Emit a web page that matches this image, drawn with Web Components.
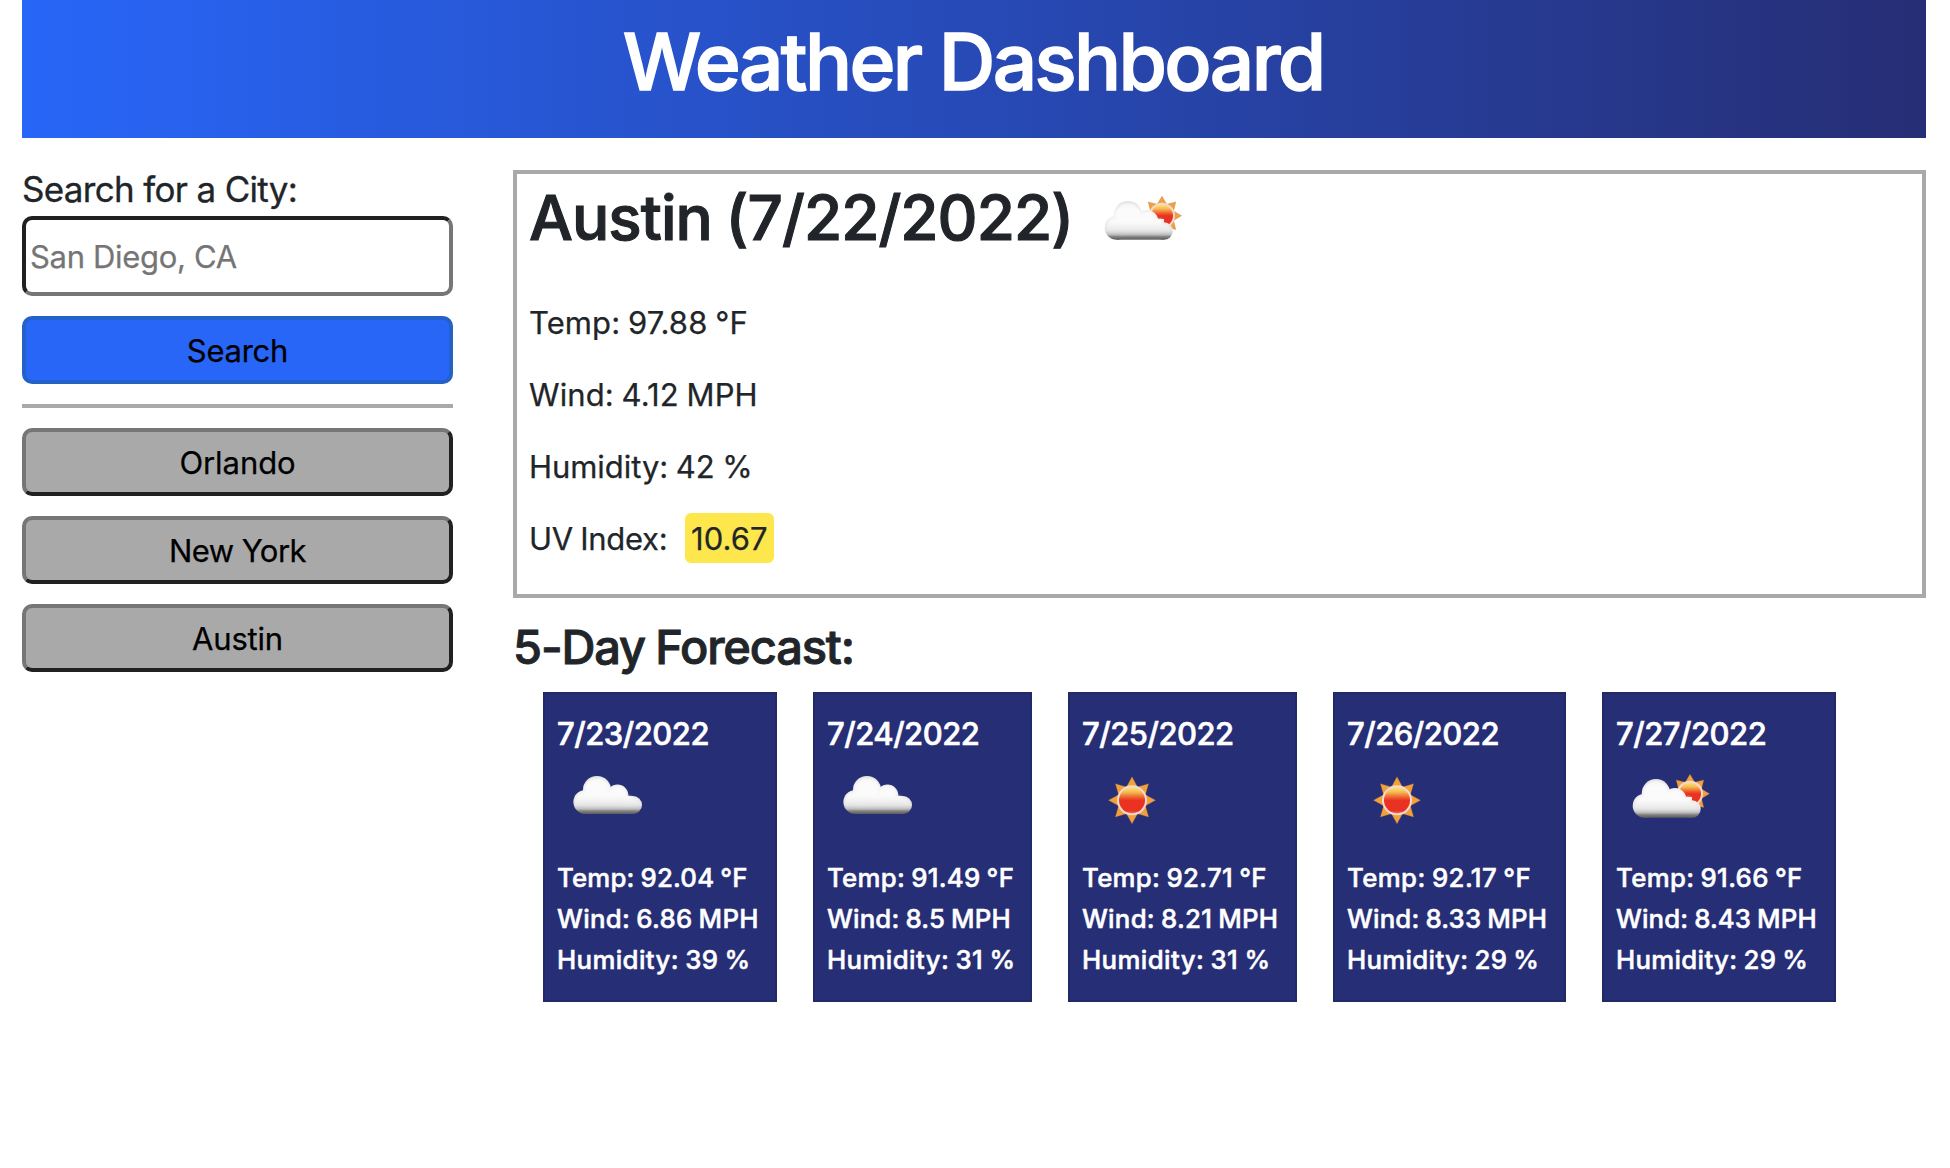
<!DOCTYPE html>
<html lang="en">
<head>
<meta charset="utf-8">
<title>Weather Dashboard</title>
<style>
body{margin:0;background:#fff;color:#212529;font-family:Inter,"Liberation Sans",sans-serif}
</style>
</head>
<body>
<weather-app></weather-app>
<script>
const define = (name, html, setup) => {
  const tpl = document.createElement('template');
  tpl.innerHTML = html;
  customElements.define(name, class extends HTMLElement {
    constructor() {
      super();
      this.attachShadow({mode: 'open'}).append(tpl.content.cloneNode(true));
    }
    connectedCallback() { if (setup) setup(this, this.shadowRoot); }
  });
};

const sun = (x, y, outer, disk) => {
  const pts = [];
  for (let i = 0; i < 16; i++) {
    const r = i % 2 ? disk + .5 : outer, a = i * Math.PI / 8;
    pts.push((x + r * Math.sin(a)).toFixed(2) + ',' + (y - r * Math.cos(a)).toFixed(2));
  }
  return `<polygon points="${pts.join(' ')}" fill="#f2a03c" stroke="#a9703f" stroke-opacity=".5" stroke-width=".6"/>
    <circle cx="${x}" cy="${y}" r="${disk + 1}" fill="#f3d9cf"/>
    <circle cx="${x}" cy="${y}" r="${disk - 1}" fill="url(#disk)"/>`;
};
const cloud = (lobes, top, bottom, left, right) => {
  const all = (d) => lobes.map(([x, y, r]) => `<circle cx="${x}" cy="${y}" r="${r - d}"/>`).join('') +
    `<rect x="${left + d}" y="${top}" width="${right - left - 2 * d}" height="${bottom - top - d}"/>`;
  return `<g fill="url(#body)">${all(0)}</g><g fill="url(#shine)" filter="url(#soft)">${all(1.8)}</g>`;
};
const art = {
  cloud: cloud([[28.4,52,12],[40,40,14],[60.5,45.4,10.8],[76,55,9]], 46, 64, 28.4, 76),
  sun: sun(50, 50.3, 23.5, 14),
  partly: sun(74, 43.7, 19.5, 12) +
    cloud([[28.7,55.7,12],[40,43.2,14.2],[59,49.5,11.4],[76,59,8.7]], 47, 67.7, 28.7, 76)
};
define('weather-icon', `<style>:host{display:block;width:100px;height:100px}svg{display:block}</style>`, (el, root) => {
  const kind = el.getAttribute('kind'), b = kind === 'cloud' ? 64 : 67.7;
  root.innerHTML += `<svg width="100" height="100" viewBox="0 0 100 100">
   <defs>
    <linearGradient id="body" gradientUnits="userSpaceOnUse" x1="0" y1="${b - 38}" x2="0" y2="${b}">
     <stop offset="0" stop-color="#dedede"/><stop offset=".3" stop-color="#f2f2f2"/><stop offset=".75" stop-color="#e4e4e4"/><stop offset=".86" stop-color="#bdbdbd"/><stop offset=".92" stop-color="#808080"/><stop offset="1" stop-color="#5e5e5e"/>
    </linearGradient>
    <linearGradient id="shine" gradientUnits="userSpaceOnUse" x1="0" y1="${b - 38}" x2="0" y2="${b}">
     <stop offset="0" stop-color="#f4f4f4"/><stop offset=".2" stop-color="#fcfcfc"/><stop offset=".55" stop-color="#fafafa"/><stop offset=".76" stop-color="#e8e8e8"/><stop offset=".85" stop-color="#c8c8c8" stop-opacity=".7"/><stop offset=".91" stop-color="#888" stop-opacity="0"/>
    </linearGradient>
    <linearGradient id="disk" x1="0" y1="0" x2="0" y2="1">
     <stop offset="0" stop-color="#fbe27a"/><stop offset=".18" stop-color="#f7bd55"/><stop offset=".4" stop-color="#ee5a2c"/><stop offset=".5" stop-color="#ea3323"/><stop offset=".9" stop-color="#ea3323"/><stop offset="1" stop-color="#ee6a66"/>
    </linearGradient>
    <filter id="soft" x="-10%" y="-10%" width="120%" height="120%"><feGaussianBlur stdDeviation="1.2"/></filter>
    <filter id="edge"><feGaussianBlur stdDeviation=".6"/></filter>
   </defs><g filter="url(#edge)">${art[kind]}</g></svg>`;
});

define('page-header', `<style>
:host{display:block;box-sizing:border-box;height:138px;padding:14px 1.5px 0 0;text-align:center;background:linear-gradient(90deg,#2866f8,#262e75)}
h1{margin:0;font-size:78.4px;line-height:95px;font-weight:500;letter-spacing:-2.66px;color:#fff;-webkit-text-stroke:1.4px #fff}
</style><h1><slot></slot></h1>`);

define('city-button', `<style>
:host{display:block}
button{display:block;box-sizing:border-box;width:100%;height:68px;margin:0;padding:1px 0 0;border:4px solid;border-color:#767676 #212121 #212121 #767676;border-radius:10px;background:#a9a9a9;color:#000;font-family:inherit;font-size:31px;line-height:38px;letter-spacing:var(--track,0);-webkit-text-stroke:.25px}
:host([primary]) button{background:#2866f8;border-color:#2461c9}
</style><button><slot></slot></button>`);

define('search-panel', `<style>
:host{display:flex;flex-direction:column;gap:20px;width:431px;flex:none}
label{font-size:35px;line-height:37px;padding-top:1px;letter-spacing:-.674px;margin-bottom:-12px;-webkit-text-stroke:.3px}
input{display:block;box-sizing:border-box;width:100%;height:80px;margin:0;padding:1px 4px 0;border:4px solid;border-color:#212121 #767676 #767676 #212121;border-radius:10px;background:#fff;font-family:inherit;font-size:31px;letter-spacing:-.323px;color:#212529}
input::placeholder{color:#757575;opacity:1;-webkit-text-stroke:.25px}
hr{width:100%;height:4px;margin:0;border:0;background:#a9a9a9}
</style>
<label for="city">Search for a City:</label>
<input id="city" placeholder="San Diego, CA">
<city-button primary style="--track:-.268px">Search</city-button>
<hr>
<city-button style="--track:-.062px">Orlando</city-button>
<city-button style="--track:-.566px">New York</city-button>
<city-button style="--track:-.206px">Austin</city-button>`);

define('current-weather', `<style>
:host{display:block;box-sizing:border-box;height:428px;border:4px solid #a9a9a9;padding-left:12px}
header{display:flex;align-items:flex-start;height:87px;margin-bottom:26.4px}
h2{margin:0;width:559px;font-size:62px;line-height:87px;font-weight:500;letter-spacing:-.95px;word-spacing:-2px;white-space:nowrap;-webkit-text-stroke:1.1px}
weather-icon{margin-top:-2px}
.rows{display:flex;flex-direction:column;font-size:31px;line-height:72px;-webkit-text-stroke:.25px;word-spacing:-1px;letter-spacing:.1px}
.rows div:nth-child(3){letter-spacing:-.05px}
.rows .uv{display:flex;align-items:center;gap:18px;letter-spacing:-.3px;height:72px}
.uv b{font-weight:400;line-height:52px;height:50px;box-sizing:border-box;width:89px;padding-left:6px;margin-top:-2px;border-radius:6px;background:#fde74c;letter-spacing:.064px}
.uv span{width:138px;white-space:nowrap}
</style>
<header><h2>Austin (7/22/2022)</h2><weather-icon kind="partly"></weather-icon></header>
<div class="rows"><div>Temp: 97.88 °F</div><div>Wind: 4.12 MPH</div><div>Humidity: 42 %</div><div class="uv"><span>UV Index:</span><b>10.67</b></div></div>`);

define('forecast-card', `<style>
:host{display:block;box-sizing:border-box;height:310px;border:2px solid #222969;padding:23.7px 0 0 12px;background:#262e75;color:#fff;font-weight:500;white-space:nowrap}
h3{margin:0;font-size:31px;line-height:32px;font-weight:500;letter-spacing:-.5px;-webkit-text-stroke:.6px}
weather-icon{margin-bottom:7px}
p{margin:0;font-size:25.8px;line-height:41px;word-spacing:-1px;-webkit-text-stroke:.5px}
</style><h3></h3><weather-icon></weather-icon><p></p><p></p><p></p>`, (el, root) => {
  const [date, kind, width, t, tl, w, wl, h, hl] = el.getAttribute('data').split('|');
  el.style.width = width + 'px';
  root.querySelector('h3').textContent = date;
  const icon = document.createElement('weather-icon');
  icon.setAttribute('kind', kind);
  root.querySelector('weather-icon').replaceWith(icon);
  const p = root.querySelectorAll('p');
  [[`Temp: ${t} °F`, tl], [`Wind: ${w} MPH`, wl], [`Humidity: ${h} %`, hl]].forEach(([text, track], i) => {
    p[i].textContent = text;
    p[i].style.letterSpacing = track + 'px';
  });
});

define('forecast-list', `<style>
:host{display:block}
h2{margin:19px 0 15px;font-size:47px;line-height:60px;font-weight:500;letter-spacing:-1.171px;word-spacing:-1px;-webkit-text-stroke:.9px}
div{display:flex;gap:36px;padding-left:30px}
</style><h2>5-Day Forecast:</h2><div>
<forecast-card data="7/23/2022|cloud|234|92.04|.17|6.86|.28|39|.37"></forecast-card>
<forecast-card data="7/24/2022|cloud|219|91.49|.27|8.5|.15|31|.4"></forecast-card>
<forecast-card data="7/25/2022|sun|229|92.71|.32|8.21|.25|31|.4"></forecast-card>
<forecast-card data="7/26/2022|sun|233|92.17|.4|8.33|.15|29|.3"></forecast-card>
<forecast-card data="7/27/2022|partly|234|91.66|.33|8.43|.1|29|.3"></forecast-card>
</div>`);

define('weather-app', `<style>
:host{display:block;padding:0 24px 0 22px}
main{display:flex;gap:60px;padding-top:32px}
section{flex:1;min-width:0}
</style>
<page-header>Weather Dashboard</page-header>
<main><search-panel></search-panel><section><current-weather></current-weather><forecast-list></forecast-list></section></main>`);
</script>
</body>
</html>
